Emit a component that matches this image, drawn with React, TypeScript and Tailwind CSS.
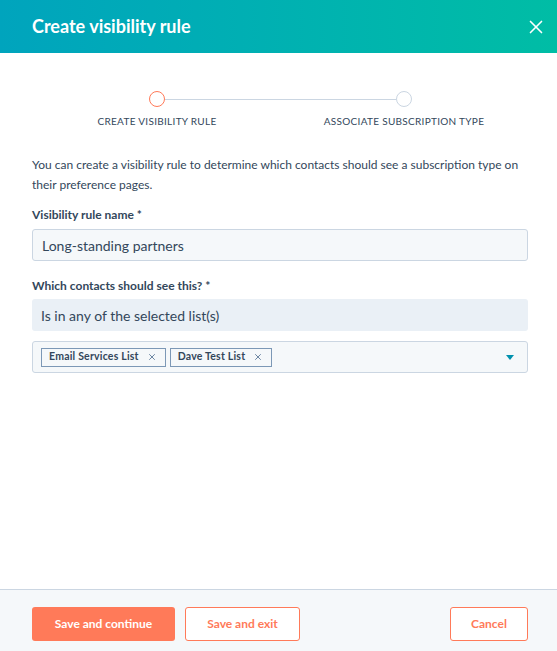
import { X } from 'lucide-react'

const font = { fontFamily: 'Lato, "Open Sans", sans-serif' }

function Tag({ label }: { label: string }) {
  return (
    <span className="flex h-[19px] items-center gap-[8px] border border-[#7c98b6] bg-[#f5f8fa] pl-[7px] pr-[8px] text-[10.5px] font-bold tracking-[0.02em] text-[#33475b]">
      {label}
      <X size={10} strokeWidth={2} className="text-[#516f90]" />
    </span>
  )
}

export default function App() {
  return (
    <div style={font} className="flex h-[651px] w-[557px] flex-col bg-white text-[#33475b]">
      {/* header */}
      <div className="flex h-[53px] shrink-0 items-center justify-between bg-gradient-to-r from-[#00a4bd] to-[#00bda5] pl-[32px] pr-[10px]">
        <h1 className="text-[18px] font-bold text-white">Create visibility rule</h1>
        <X size={22} strokeWidth={1.8} className="text-white" />
      </div>

      {/* body */}
      <div className="flex flex-1 flex-col pl-[32px] pr-[29px] pt-[38px]">
        {/* stepper */}
        <div className="flex flex-col">
          <div className="flex items-center pl-[117px] pr-[116px]">
            <span className="h-[16px] w-[16px] shrink-0 rounded-full border-[1.5px] border-[#ff7a59] bg-white" />
            <span className="h-px flex-1 bg-[#cbd6e2]" />
            <span className="h-[16px] w-[16px] shrink-0 rounded-full border-[1.5px] border-[#cbd6e2] bg-white" />
          </div>
          <div className="mt-[7px] flex gap-[47px] pl-[25px] text-[10px] uppercase tracking-[0.03em] text-[#33475b]">
            <span className="w-[200px] text-center">Create visibility rule</span>
            <span className="w-[200px] text-center">Associate subscription type</span>
          </div>
        </div>

        <p className="mt-[26px] text-[12px] leading-[20px]">
          You can create a visibility rule to determine which contacts should see a subscription type on their preference pages.
        </p>

        <label className="mt-[12px] text-[12px] font-bold leading-[16px]">Visibility rule name *</label>
        <div className="mt-[6px] flex h-[32px] items-center rounded-[3px] border border-[#cbd6e2] bg-[#f5f8fa] px-[9px] text-[14px]">
          Long-standing partners
        </div>

        <label className="mt-[17px] text-[12px] font-bold leading-[16px]">Which contacts should see this? *</label>
        <div className="mt-[5px] flex h-[32px] items-center rounded-[3px] bg-[#eaf0f6] px-[9px] text-[14px]">
          Is in any of the selected list(s)
        </div>

        <div className="mt-[10px] flex h-[32px] items-center gap-[4px] rounded-[3px] border border-[#cbd6e2] bg-[#f5f8fa] pl-[8px] pr-[13px]">
          <Tag label="Email Services List" />
          <Tag label="Dave Test List" />
          <span className="flex-1" />
          <svg width="8" height="5" viewBox="0 0 8 5">
            <path d="M0 0h8L4 5z" fill="#0091ae" />
          </svg>
        </div>
      </div>

      {/* footer */}
      <div className="flex h-[62px] shrink-0 items-start gap-[10px] border-t border-[#cbd6e2] bg-[#f5f8fa] pl-[32px] pr-[29px] pt-[17px]">
        <button className="h-[34px] w-[143px] rounded-[3px] bg-[#ff7a59] text-[12px] font-bold text-white">Save and continue</button>
        <button className="h-[34px] w-[115px] rounded-[3px] border border-[#ff7a59] bg-white text-[12px] font-bold text-[#ff7a59]">Save and exit</button>
        <span className="flex-1" />
        <button className="h-[34px] w-[78px] rounded-[3px] border border-[#ff7a59] bg-white text-[12px] font-bold text-[#ff7a59]">Cancel</button>
      </div>
    </div>
  )
}
